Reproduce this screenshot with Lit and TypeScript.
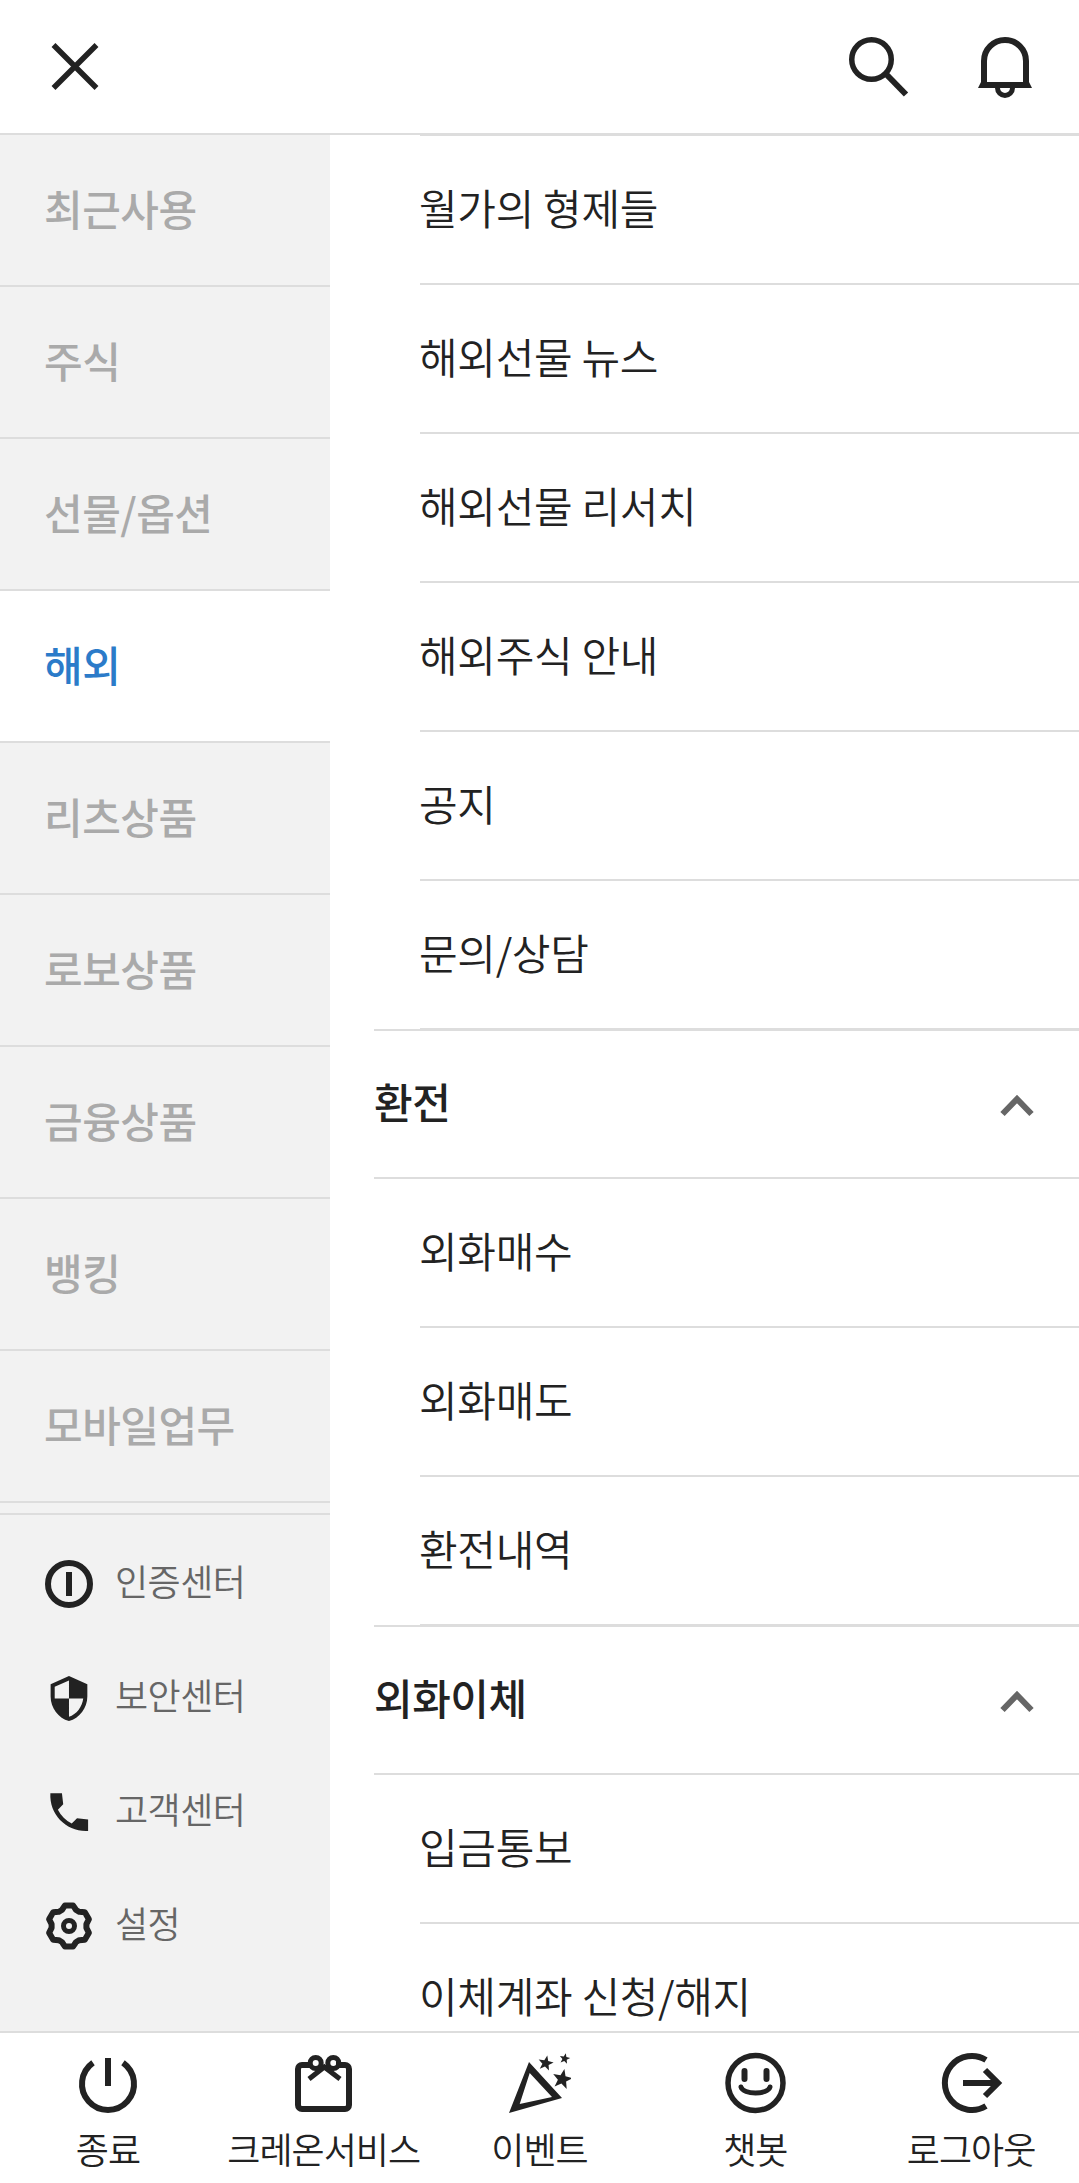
import { css, html, LitElement, svg } from 'lit';
import { customElement } from 'lit/decorators.js';

const NAV = ['최근사용', '주식', '선물/옵션', '해외', '리츠상품', '로보상품', '금융상품', '뱅킹', '모바일업무'];

const star = (cx: number, cy: number, r: number) => {
  const pts: string[] = [];
  for (let i = 0; i < 10; i++) {
    const rad = i % 2 ? r * 0.42 : r;
    const a = -Math.PI / 2 + (i * Math.PI) / 5 + 0.2;
    pts.push(`${(cx + rad * Math.cos(a)).toFixed(1)},${(cy + rad * Math.sin(a)).toFixed(1)}`);
  }
  return svg`<polygon points=${pts.join(' ')} fill="#222" stroke="none"></polygon>`;
};

// six teeth, one straight up, like the settings icon in the reference
const gearPoints = () => {
  const pts: string[] = [];
  const at = (deg: number, r: number) => {
    const a = (deg * Math.PI) / 180;
    pts.push(`${(24 + r * Math.cos(a)).toFixed(1)},${(24 + r * Math.sin(a)).toFixed(1)}`);
  };
  for (let i = 0; i < 6; i++) {
    const t = -90 + 60 * i;
    at(t - 24, 17.5);
    at(t - 11, 21);
    at(t + 11, 21);
    at(t + 24, 17.5);
  }
  return pts.join(' ');
};

const SIDE_ICONS = {
  cert: svg`<circle cx="24" cy="24" r="21" fill="none" stroke="#222" stroke-width="6"></circle><rect x="21" y="12" width="6" height="24" fill="#222"></rect>`,
  shield: svg`<g transform="translate(-0.5 0) scale(2.04)"><path fill="#222" d="M12 1L3 5v6c0 5.55 3.84 10.74 9 12 5.16-1.26 9-6.45 9-12V5l-9-4zm0 10.99h7c-.53 4.12-3.28 7.79-7 8.94V12H5V6.3l7-3.11v8.8z"></path></g>`,
  phone: svg`<g transform="translate(-1 -1) scale(2.1)"><path fill="#222" d="M21 15.46l-5.27-.61-2.52 2.52c-2.83-1.44-5.15-3.75-6.59-6.59l2.53-2.53L8.54 3H3.03C2.45 13.18 10.82 21.55 21 20.97v-5.51z"></path></g>`,
  gear: svg`<polygon points=${gearPoints()} fill="none" stroke="#222" stroke-width="6" stroke-linejoin="round"></polygon>
    <circle cx="24" cy="24" r="5.5" fill="none" stroke="#222" stroke-width="5"></circle>`,
};

const SIDE_LINKS = [
  { label: '인증센터', icon: SIDE_ICONS.cert },
  { label: '보안센터', icon: SIDE_ICONS.shield },
  { label: '고객센터', icon: SIDE_ICONS.phone },
  { label: '설정', icon: SIDE_ICONS.gear },
];

const TABS = [
  {
    label: '종료',
    icon: svg`<path d="M17 10.7A26 26 0 1 0 47 10.7"></path><path d="M32 6V34"></path>`,
  },
  {
    label: '크레온서비스',
    icon: svg`<path d="M19 13H10a4 4 0 0 0-4 4V53a4 4 0 0 0 4 4H53a4 4 0 0 0 4-4V17a4 4 0 0 0-4-4H44"></path>
      <path d="M17 27L32.3 15L48 27" stroke-width="5"></path>
      <circle cx="23.7" cy="11" r="5.5" stroke-width="5"></circle><circle cx="41.3" cy="11" r="5.5" stroke-width="5"></circle>`,
  },
  {
    label: '이벤트',
    icon: svg`<path fill="#222" stroke="none" fill-rule="evenodd" d="M2 61L22 10L55 46ZM12.7 52L45 45L22.7 21Z"></path>${star(38.7, 11.3, 8)}${star(57.7, 6.7, 5.5)}${star(55.3, 27.3, 10.5)}`,
  },
  {
    label: '챗봇',
    icon: svg`<circle cx="32.5" cy="31" r="27.5" stroke-width="5.5"></circle>
      <path d="M21.5 19V27M43.5 19V27" stroke-linecap="round"></path>
      <path d="M18 35C20 43 45 43 47 35" stroke-width="5" stroke-linecap="round"></path>`,
  },
  {
    label: '로그아웃',
    icon: svg`<path d="M47 8A27 27 0 1 0 47 54"></path><path d="M24 31H58"></path><path d="M46 18L59 31L46 44"></path>`,
  },
];

const GROUPS = [
  { subs: ['월가의 형제들', '해외선물 뉴스', '해외선물 리서치', '해외주식 안내', '공지', '문의/상담'] },
  { title: '환전', subs: ['외화매수', '외화매도', '환전내역'] },
  { title: '외화이체', subs: ['입금통보', '이체계좌 신청/해지'] },
];

@customElement('app-root')
export class AppRoot extends LitElement {
  public render() {
    return html`
      <header class="top">
        <svg class="ic-close" viewBox="45 37 60 60">
          <path d="M53.5 46L96.5 89M96.5 46L53.5 89" fill="none" stroke="#222" stroke-width="5.5"></path>
        </svg>
        <svg class="ic-search" viewBox="846 34 64 64">
          <circle cx="871.5" cy="59.5" r="19.75" fill="none" stroke="#222" stroke-width="5.5"></circle>
          <path d="M886 74L906 94.5" fill="none" stroke="#222" stroke-width="6"></path>
        </svg>
        <svg class="ic-bell" viewBox="973 34 64 64">
          <path d="M984 85V61a21 21 0 0 1 42 0V85" fill="none" stroke="#222" stroke-width="6"></path>
          <polygon points="978,88 1032,88 1029,82 981,82" fill="#222"></polygon>
          <path d="M997.5 88a7.5 7.5 0 0 0 15 0" fill="none" stroke="#222" stroke-width="5"></path>
        </svg>
      </header>
      <div class="main">
        <nav class="side">
          ${NAV.map((n) => html`<div class="nav ${n === '해외' ? 'on' : ''}">${n}</div>`)}
          <div class="links">
            ${SIDE_LINKS.map(
              (l) => html`<div class="link">
                <svg viewBox="0 0 48 48">${l.icon}</svg>
                <span>${l.label}</span>
              </div>`,
            )}
          </div>
        </nav>
        <section class="list">
          ${GROUPS.map(
            (g) => html`
              ${g.title
                ? html`<div class="head">
                    <span>${g.title}</span>
                    <svg viewBox="0 0 40 28">
                      <path d="M5.5 24L20 9L34.5 24" fill="none" stroke="#666" stroke-width="6"></path>
                    </svg>
                  </div>`
                : html`<div class="first"></div>`}
              ${g.subs.map((s) => html`<div class="sub">${s}</div>`)}
            `,
          )}
        </section>
      </div>
      <footer class="tabs">
        ${TABS.map(
          (t) => html`<div class="tab">
            <svg viewBox="0 0 64 64">${t.icon}</svg>
            <span>${t.label}</span>
          </div>`,
        )}
      </footer>
    `;
  }

  public static styles = css`
    :host {
      display: flex;
      flex-direction: column;
      height: 2183px;
      overflow: hidden;
      background: #fff;
      color: #222;
      font-family: 'Noto Sans CJK KR', 'Noto Sans', sans-serif;
    }
    .top {
      box-sizing: border-box;
      height: 135px;
      flex: none;
      display: flex;
      align-items: center;
      padding: 0 42px 2px 45px;
      border-bottom: 2px solid #ddd;
    }
    .ic-close {
      width: 60px;
      height: 60px;
      margin-right: auto;
    }
    .ic-search,
    .ic-bell {
      width: 64px;
      height: 64px;
    }
    .ic-bell {
      margin-left: 63px;
    }
    .main {
      flex: 1;
      min-height: 0;
      display: flex;
      overflow: hidden;
    }
    .side {
      width: 330px;
      flex: none;
      background: #f2f2f2;
    }
    .nav {
      box-sizing: border-box;
      height: 152px;
      display: flex;
      align-items: center;
      padding: 0 0 6px 44px;
      border-bottom: 2px solid #ddd;
      font-size: 42px;
      font-weight: 500;
      letter-spacing: -0.5px;
      color: #aaa;
    }
    .nav.on {
      background: #fff;
      color: #2b7bc9;
    }
    .links {
      margin-top: 10px;
      border-top: 2px solid #ddd;
      padding-top: 12px;
    }
    .link {
      box-sizing: border-box;
      height: 114px;
      display: flex;
      align-items: center;
      padding-left: 45px;
      font-size: 36px;
      font-weight: 350;
      color: #666;
      letter-spacing: -0.5px;
    }
    .link span {
      margin-bottom: 8px;
    }
    .link svg {
      width: 48px;
      height: 48px;
      margin-right: 22px;
      flex: none;
    }
    .list {
      flex: 1;
      min-width: 0;
      padding-left: 44px;
    }
    .first {
      margin-left: 46px;
      border-top: 1px solid #ddd;
    }
    .head {
      box-sizing: border-box;
      height: 150px;
      margin-top: -1px;
      display: flex;
      align-items: center;
      justify-content: space-between;
      padding-right: 42px;
      border-top: 2px solid #ddd;
      border-bottom: 2px solid #ddd;
      font-size: 42px;
      font-weight: 500;
      letter-spacing: -0.5px;
    }
    .head span {
      margin-bottom: 8px;
    }
    .head svg {
      width: 40px;
      height: 28px;
    }
    .sub {
      box-sizing: border-box;
      height: 149px;
      margin-left: 46px;
      display: flex;
      align-items: center;
      padding-bottom: 6px;
      border-bottom: 2px solid #ddd;
      font-size: 42px;
      font-weight: 350;
      letter-spacing: -0.3px;
      white-space: nowrap;
    }
    .sub {
      text-indent: -1px;
    }
    .tabs {
      box-sizing: border-box;
      height: 152px;
      flex: none;
      display: grid;
      grid-template-columns: repeat(5, 1fr);
      border-top: 2px solid #ddd;
      padding-top: 19px;
    }
    .tab {
      display: flex;
      flex-direction: column;
      align-items: center;
      gap: 14px;
      font-size: 36px;
      font-weight: 350;
      line-height: 36px;
      letter-spacing: -1px;
      white-space: nowrap;
    }
    .tab svg {
      width: 64px;
      height: 64px;
      fill: none;
      stroke: #222;
      stroke-width: 6;
    }
  `;
}
